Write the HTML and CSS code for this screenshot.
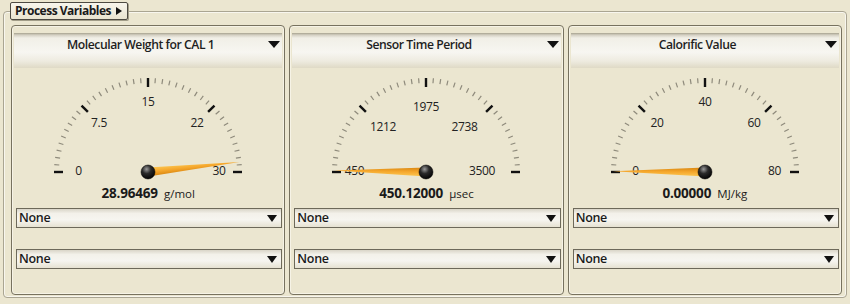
FILE: index.html
```html
<!DOCTYPE html>
<html lang="en">
<head>
	<meta charset="UTF-8">
	<title>Process Variables</title>
	<link rel="stylesheet" href="styles.css">
</head>
<body>
	<svg class="defs" width="0" height="0">
		<defs>
			<linearGradient id="needleFill" x1="0" y1="0" x2="0" y2="1">
				<stop offset="0" stop-color="#fcc650"/>
				<stop offset="0.5" stop-color="#f5a72c"/>
				<stop offset="1" stop-color="#d9860f"/>
			</linearGradient>
			<radialGradient id="hubFill" cx="0.4" cy="0.3" r="0.7">
				<stop offset="0" stop-color="#9a9a9a"/>
				<stop offset="0.45" stop-color="#2a2a2a"/>
				<stop offset="1" stop-color="#050505"/>
			</radialGradient>
		</defs>
	</svg>

	<fieldset class="group">
		<legend class="group__tab">Process Variables <svg class="tab-arrow" width="6" height="8" viewBox="0 0 6 8"><polygon points="0,0 6,4 0,8"/></svg></legend>

		<div class="panel">
			<div class="panel__title">Molecular Weight for CAL 1<svg class="arrow arrow--big" width="12" height="7" viewBox="0 0 12 7"><polygon points="0,0 12,0 6,7"/></svg></div>
			<svg class="gauge" width="268" height="112" viewBox="0 0 268 112">
				<g class="ticks"></g>
				<g class="labels">
					<text x="64.5" y="102.5">0</text>
					<text x="85" y="54.5">7.5</text>
					<text x="134" y="33.5">15</text>
					<text x="183" y="54.5">22</text>
					<text x="205" y="102.5">30</text>
				</g>
				<g transform="translate(134 104) rotate(-6.2)">
					<polygon class="needle" points="0,-4.5 92,0 0,4.5"/>
				</g>
				<circle class="hub" cx="134" cy="104" r="7"/>
			</svg>
			<div class="panel__value"><b>28.96469</b> <span>g/mol</span></div>
			<div class="select">None<svg class="arrow" width="10" height="7" viewBox="0 0 10 7"><polygon points="0,0 10,0 5,7"/></svg></div>
			<div class="select">None<svg class="arrow" width="10" height="7" viewBox="0 0 10 7"><polygon points="0,0 10,0 5,7"/></svg></div>
		</div>

		<div class="panel">
			<div class="panel__title">Sensor Time Period<svg class="arrow arrow--big" width="12" height="7" viewBox="0 0 12 7"><polygon points="0,0 12,0 6,7"/></svg></div>
			<svg class="gauge" width="268" height="112" viewBox="0 0 268 112">
				<g class="ticks"></g>
				<g class="labels">
					<text x="62.5" y="102.5">450</text>
					<text x="91" y="58.5">1212</text>
					<text x="134" y="38.5">1975</text>
					<text x="172.5" y="58.5">2738</text>
					<text x="190" y="102.5">3500</text>
				</g>
				<g transform="translate(134 104) rotate(-179)">
					<polygon class="needle" points="0,-4.5 92,0 0,4.5"/>
				</g>
				<circle class="hub" cx="134" cy="104" r="7"/>
			</svg>
			<div class="panel__value"><b>450.12000</b> <span>µsec</span></div>
			<div class="select">None<svg class="arrow" width="10" height="7" viewBox="0 0 10 7"><polygon points="0,0 10,0 5,7"/></svg></div>
			<div class="select">None<svg class="arrow" width="10" height="7" viewBox="0 0 10 7"><polygon points="0,0 10,0 5,7"/></svg></div>
		</div>

		<div class="panel">
			<div class="panel__title">Calorific Value<svg class="arrow arrow--big" width="12" height="7" viewBox="0 0 12 7"><polygon points="0,0 12,0 6,7"/></svg></div>
			<svg class="gauge" width="268" height="112" viewBox="0 0 268 112">
				<g class="ticks"></g>
				<g class="labels">
					<text x="64.5" y="102.5">0</text>
					<text x="86" y="54.5">20</text>
					<text x="134" y="33.5">40</text>
					<text x="183" y="54.5">60</text>
					<text x="203.5" y="102.5">80</text>
				</g>
				<g transform="translate(134 104) rotate(-179.5)">
					<polygon class="needle" points="0,-4.5 92,0 0,4.5"/>
				</g>
				<circle class="hub" cx="134" cy="104" r="7"/>
			</svg>
			<div class="panel__value"><b>0.00000</b> <span>MJ/kg</span></div>
			<div class="select">None<svg class="arrow" width="10" height="7" viewBox="0 0 10 7"><polygon points="0,0 10,0 5,7"/></svg></div>
			<div class="select">None<svg class="arrow" width="10" height="7" viewBox="0 0 10 7"><polygon points="0,0 10,0 5,7"/></svg></div>
		</div>
	</fieldset>

	<script src="script.js"></script>
</body>
</html>
```

FILE: styles.css
```css
*{
	box-sizing: border-box;
}
body{
	margin: 0;
	width: 850px;
	height: 304px;
	overflow: hidden;
	background: #ebe6d0;
	font-family: "Open Sans", "Noto Sans", sans-serif;
	color: #1a1a1a;
}
.defs{
	position: absolute;
}
.group{
	margin: 2px 3px 0;
	padding: 5px 4px 2px 7px;
	border: 1px solid #aaa592;
	border-radius: 4px;
	box-shadow: inset 0 0 0 1px #f8f6ee;
	display: grid;
	grid-template-columns: repeat(3, 1fr);
	gap: 4px;
	min-width: 0;
}
.group__tab{
	margin-left: -1px;
	height: 18px;
	padding: 0 5px 0 4px;
	border: 1px solid #4d4a42;
	border-radius: 2px;
	background: linear-gradient(#f7f5ec, #e9e4d0);
	box-shadow: 1px 1px 0 #a29d88;
	font-size: 12px;
	font-weight: 700;
	letter-spacing: -0.5px;
	line-height: 16px;
	display: flex;
	align-items: center;
	gap: 5px;
}
.tab-arrow{
	fill: #111;
}
.panel{
	height: 270px;
	padding: 7px 2px 0;
	border: 1px solid #77725f;
	border-radius: 4px;
	box-shadow: inset 0 0 0 1px #f6f3e6;
	display: flex;
	flex-direction: column;
}
.panel__title{
	position: relative;
	height: 35px;
	padding: 4px 15px 0 0;
	text-align: center;
	font-size: 12.2px;
	font-weight: 600;
	letter-spacing: -0.45px;
	line-height: 16px;
	color: #1e1e1e;
	background: linear-gradient(#a7a28f 0, #d4d0c3 2px, #f1efe7 5px, #f7f6f1 55%, #eeebe0 80%, #dfdac6 100%);
}
.arrow{
	position: absolute;
	right: 4px;
	top: 6px;
	fill: #111;
}
.arrow--big{
	right: 2px;
	top: 8px;
}
.gauge{
	display: block;
}
.ticks line{
	stroke-linecap: butt;
}
.ticks .major{
	stroke: #111;
	stroke-width: 2.4;
}
.ticks .minor{
	stroke: #8e8a7b;
	stroke-width: 1.2;
}
.labels text{
	font-size: 12px;
	letter-spacing: -0.3px;
	fill: #222;
	text-anchor: middle;
	dominant-baseline: central;
}
.needle{
	fill: url(#needleFill);
}
.hub{
	fill: url(#hubFill);
	stroke: #000;
	stroke-width: 0.5;
}
.panel__value{
	height: 22px;
	margin-bottom: 6px;
	text-align: center;
	line-height: 24px;
}
.panel__value b{
	font-size: 13.5px;
	letter-spacing: -0.2px;
}
.panel__value span{
	font-size: 11.5px;
	margin-left: 2px;
}
.select{
	position: relative;
	height: 20px;
	margin: 0 0 21px 2px;
	padding-left: 2px;
	border: 1px solid #6d695a;
	background: linear-gradient(#d9d5c8, #f3f1ea 25%, #f6f5f0 60%, #e6e2d2);
	font-size: 12.5px;
	font-weight: 600;
	letter-spacing: -0.3px;
	line-height: 18px;
}
```

FILE: script.js
```js
var ticks = document.querySelectorAll('.ticks');

for (var n = 0; n < ticks.length; n++) {
	var html = '';
	for (var i = 0; i <= 40; i++) {
		var a = Math.PI * i / 40;
		var major = i % 10 == 0;
		var r1 = major ? 85 : 89;
		var r2 = 94;
		var c = Math.cos(a), s = Math.sin(a);
		html += '<line class="' + (major ? 'major' : 'minor') + '"'
			+ ' x1="' + (134 - r1 * c).toFixed(2) + '" y1="' + (104 - r1 * s).toFixed(2) + '"'
			+ ' x2="' + (134 - r2 * c).toFixed(2) + '" y2="' + (104 - r2 * s).toFixed(2) + '"/>';
	}
	ticks[n].innerHTML = html;
}
```
